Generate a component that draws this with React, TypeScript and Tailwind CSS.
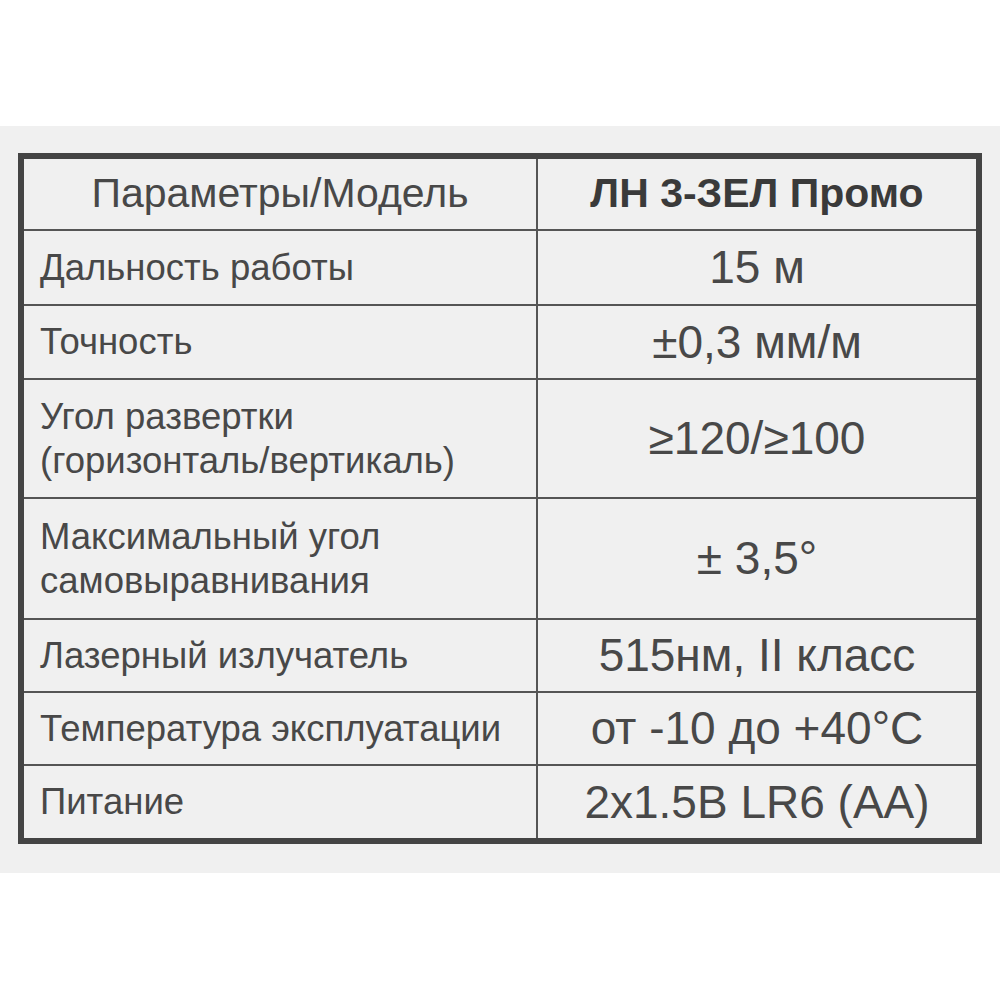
const rows: { label: string[]; value: string; h: string }[] = [
  { label: ["Дальность работы"], value: "15 м", h: "h-[75px]" },
  { label: ["Точность"], value: "±0,3 мм/м", h: "h-[74px]" },
  { label: ["Угол развертки", "(горизонталь/вертикаль)"], value: "≥120/≥100", h: "h-[119px]" },
  { label: ["Максимальный угол", "самовыравнивания"], value: "± 3,5°", h: "h-[121px]" },
  { label: ["Лазерный излучатель"], value: "515нм, II класс", h: "h-[73px]" },
  { label: ["Температура эксплуатации"], value: "от -10 до +40°С", h: "h-[73px]" },
  { label: ["Питание"], value: "2x1.5В LR6 (АА)", h: "h-[72px]" },
];

export default function App() {
  return (
    <div className="w-[1000px] h-[1000px] bg-white flex flex-col font-['Liberation_Sans',Arial,sans-serif] text-[#484848]">
      <div className="h-[126px]" />
      <div className="h-[747px] bg-[#f0f0f0] pt-[27px] pl-[18px] pr-[18px]">
        <div className="border-[6px] border-[#444] flex flex-col">
          {/* Header */}
          <div className="flex h-[72px] border-b-2 border-[#555]">
            <div className="w-[514px] border-r-2 border-[#555] flex items-center justify-center text-[41px]">
              Параметры/Модель
            </div>
            <div className="flex-1 flex items-center justify-center text-[41px] font-bold text-[#3a3a3a]">
              ЛН 3-ЗЕЛ Промо
            </div>
          </div>
          {rows.map((r, i) => (
            <div
              key={i}
              className={`flex ${r.h} ${i < rows.length - 1 ? "border-b-2 border-[#555]" : ""}`}
            >
              <div className="w-[514px] border-r-2 border-[#555] flex flex-col justify-center pl-[16px] text-[36.5px] leading-[44px]">
                {r.label.map((l, j) => (
                  <span key={j}>{l}</span>
                ))}
              </div>
              <div className="flex-1 flex items-center justify-center text-[46px]">
                {r.value}
              </div>
            </div>
          ))}
        </div>
      </div>
      <div className="flex-1" />
    </div>
  );
}
